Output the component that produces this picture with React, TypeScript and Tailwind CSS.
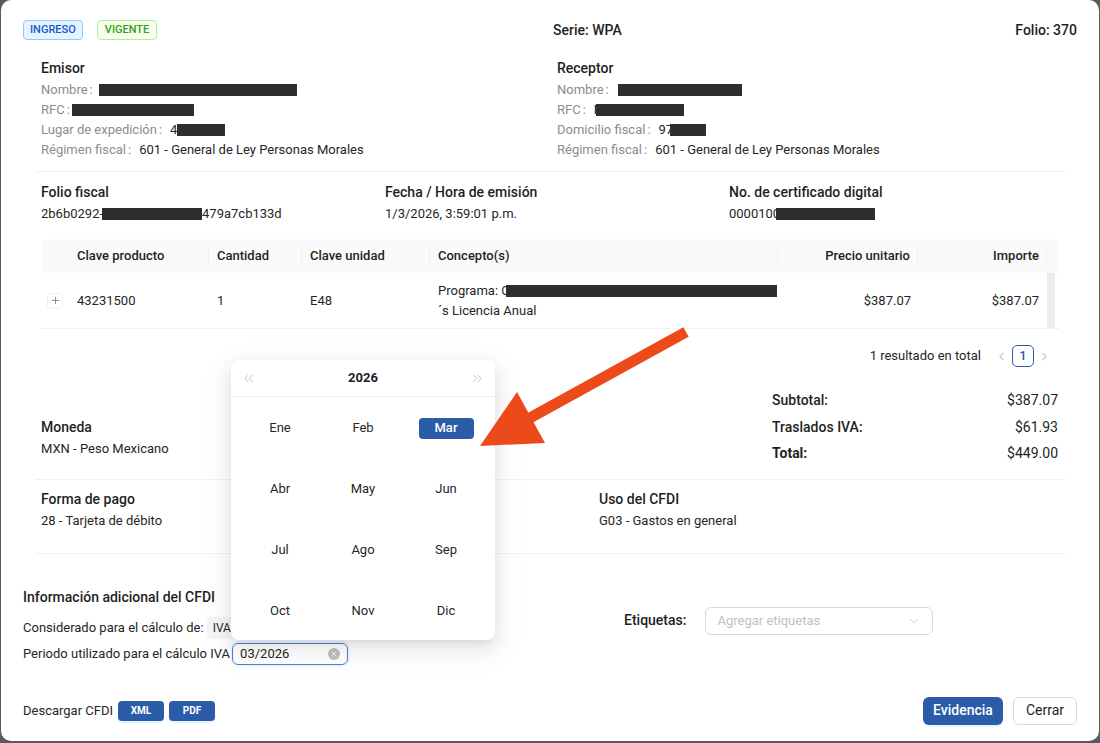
import { ChevronDown, ChevronLeft, ChevronRight, ChevronsLeft, ChevronsRight, Plus, X } from "lucide-react";

const Bar = ({ w, className = "" }: { w: string; className?: string }) => (
  <span className={`inline-block h-[12px] shrink-0 bg-[#2e2e2e] ${w} ${className}`} />
);

const Field = ({ label, children }: { label: string; children: React.ReactNode }) => (
  <div className="flex h-[20px] items-center text-[13px]">
    <span className="text-[#8c8c8c]">{label}</span>
    <span className="ml-[2px] mr-[8px] text-[#8c8c8c]">:</span>
    <span className="flex items-center text-[#262626]">{children}</span>
  </div>
);

const Heading = ({ children }: { children: React.ReactNode }) => (
  <div className="h-[20px] text-[14px] font-medium leading-[20px] text-[#1f1f1f]">{children}</div>
);

const Value = ({ children }: { children: React.ReactNode }) => (
  <div className="mt-[2px] flex h-[20px] items-center text-[13px] text-[#262626]">{children}</div>
);

const Th = ({ children, right, sep = true }: { children?: React.ReactNode; right?: boolean; sep?: boolean }) => (
  <div className={`relative flex items-center px-[8px] text-[13px] font-medium text-[#1f1f1f] ${right ? "justify-end" : ""}`}>
    {children}
    {sep && <span className="absolute right-0 top-1/2 h-[22px] w-px -translate-y-1/2 bg-[#f0f0f0]" />}
  </div>
);

const months = ["Ene", "Feb", "Mar", "Abr", "May", "Jun", "Jul", "Ago", "Sep", "Oct", "Nov", "Dic"];

export default function App() {
  return (
    <div className="h-[743px] w-[1100px] bg-[#5a5a5a] px-px pb-[2px] font-['Roboto',sans-serif]">
      <div className="relative h-full overflow-hidden rounded-[10px] bg-white">
        {/* header */}
        <div className="mt-[20px] flex h-[20px] items-center px-[22px]">
          <div className="flex w-[530px] items-center gap-[14px]">
            <span className="flex h-[20px] items-center rounded-[4px] border border-[#91caff] bg-[#e6f4ff] px-[6px] text-[11px] font-medium text-[#1554d1]">
              INGRESO
            </span>
            <span className="flex h-[20px] items-center rounded-[4px] border border-[#b7eb8f] bg-[#f6ffed] px-[7px] text-[11px] font-medium text-[#389e0d]">
              VIGENTE
            </span>
          </div>
          <div className="text-[14px] font-medium text-[#1f1f1f]">Serie: WPA</div>
          <div className="ml-auto text-[14px] font-medium text-[#1f1f1f]">Folio: 370</div>
        </div>

        {/* emisor / receptor */}
        <div className="mt-[18px] grid grid-cols-[516px_1fr] px-[40px]">
          <div>
            <Heading>Emisor</Heading>
            <div className="mt-[2px]">
              <Field label="Nombre">
                <Bar w="w-[198px]" className="-ml-[2px]" />
              </Field>
              <Field label="RFC">
                <Bar w="w-[122px]" className="-ml-[6px]" />
              </Field>
              <Field label="Lugar de expedición">
                4<Bar w="w-[48px]" />
              </Field>
              <Field label="Régimen fiscal">601 - General de Ley Personas Morales</Field>
            </div>
          </div>
          <div>
            <Heading>Receptor</Heading>
            <div className="mt-[2px]">
              <Field label="Nombre">
                <Bar w="w-[124px]" className="ml-[1px]" />
              </Field>
              <Field label="RFC">
                N<Bar w="w-[88px]" className="-ml-[7px]" />
              </Field>
              <Field label="Domicilio fiscal">
                97<Bar w="w-[36px]" className="-ml-[3px]" />
              </Field>
              <Field label="Régimen fiscal">601 - General de Ley Personas Morales</Field>
            </div>
          </div>
        </div>

        <div className="mx-[34px] mt-[11px] border-t border-[#f0f0f0]" />

        {/* folio fiscal row */}
        <div className="mt-[10px] grid grid-cols-[344px_344px_1fr] px-[40px]">
          <div>
            <Heading>Folio fiscal</Heading>
            <Value>
              2b6b0292-<Bar w="w-[100px]" className="-ml-[1px]" />
              479a7cb133d
            </Value>
          </div>
          <div>
            <Heading>Fecha / Hora de emisión</Heading>
            <Value>1/3/2026, 3:59:01 p.m.</Value>
          </div>
          <div>
            <Heading>No. de certificado digital</Heading>
            <Value>
              0000100<Bar w="w-[99px]" className="-ml-[4px]" />
            </Value>
          </div>
        </div>

        {/* table */}
        <div className="mx-[40px] mt-[15px]">
          <div className="grid h-[34px] grid-cols-[28px_140px_93px_128px_348px_140px_129px_12px] rounded-t-[8px] bg-[#fafafa]">
            <div />
            <Th>Clave producto</Th>
            <Th>Cantidad</Th>
            <Th>Clave unidad</Th>
            <Th>Concepto(s)</Th>
            <Th right>Precio unitario</Th>
            <Th right>Importe</Th>
            <div />
          </div>
          <div className="grid h-[56px] grid-cols-[28px_140px_93px_128px_348px_140px_129px_12px] border-b border-[#f0f0f0] text-[13px] text-[#262626]">
            <div className="flex items-center justify-center">
              <span className="flex h-[16px] w-[16px] items-center justify-center rounded-[4px] border border-[#f0f0f0] text-[#595959]">
                <Plus size={11} strokeWidth={1.4} />
              </span>
            </div>
            <div className="flex items-center px-[8px]">43231500</div>
            <div className="flex items-center px-[8px]">1</div>
            <div className="flex items-center px-[8px]">E48</div>
            <div className="flex flex-col justify-center whitespace-nowrap px-[8px] leading-[20px]">
              <div className="flex items-center">
                Programa: C<Bar w="w-[271px]" className="-ml-[4px]" />
              </div>
              <div>´s Licencia Anual</div>
            </div>
            <div className="flex items-center justify-end px-[7px]">$387.07</div>
            <div className="flex items-center justify-end px-[8px]">$387.07</div>
            <div className="flex">
              <div className="w-[8px] bg-[#ececec]" />
            </div>
          </div>
        </div>

        {/* pagination */}
        <div className="mr-[48px] mt-[16px] flex h-[22px] items-center justify-end text-[13px] text-[#262626]">
          <span className="mr-[14px]">1 resultado en total</span>
          <ChevronLeft size={13} className="text-[#c8c8c8]" />
          <span className="mx-[4px] flex h-[22px] w-[22px] items-center justify-center rounded-[5px] border border-[#2a5ca8] text-[13px] font-medium text-[#2a5ca8]">
            1
          </span>
          <ChevronRight size={13} className="text-[#c8c8c8]" />
        </div>

        {/* moneda + totals */}
        <div className="mt-[20px] flex px-[40px]">
          <div className="mt-[30px]">
            <Heading>Moneda</Heading>
            <Value>MXN - Peso Mexicano</Value>
          </div>
          <div className="ml-auto mr-px w-[286px] text-[14px] leading-[26.5px] text-[#1f1f1f]">
            <div className="flex justify-between">
              <span className="font-medium">Subtotal:</span>
              <span>$387.07</span>
            </div>
            <div className="flex justify-between">
              <span className="font-medium">Traslados IVA:</span>
              <span>$61.93</span>
            </div>
            <div className="flex justify-between">
              <span className="font-bold">Total:</span>
              <span>$449.00</span>
            </div>
          </div>
        </div>

        <div className="mx-[34px] mt-[12px] border-t border-[#f0f0f0]" />

        {/* forma de pago */}
        <div className="mt-[9px] grid grid-cols-[558px_1fr] px-[40px]">
          <div>
            <Heading>Forma de pago</Heading>
            <Value>28 - Tarjeta de débito</Value>
          </div>
          <div>
            <Heading>Uso del CFDI</Heading>
            <Value>G03 - Gastos en general</Value>
          </div>
        </div>

        <div className="mx-[34px] mt-[22px] border-t border-[#f0f0f0]" />

        {/* additional info */}
        <div className="mt-[33px] flex px-[22px]">
          <div className="w-[601px]">
            <Heading>Información adicional del CFDI</Heading>
            <div className="mt-[10px] flex h-[22px] items-center text-[13px] text-[#262626]">
              <span>Considerado para el cálculo de:</span>
              <span className="ml-[3px] flex h-[22px] items-center rounded-[4px] bg-[#f5f5f5] px-[6px] text-[12px]">IVA</span>
            </div>
            <div className="mt-[4px] flex h-[22px] items-center text-[13px] text-[#262626]">
              <span>Periodo utilizado para el cálculo IVA</span>
              <div className="ml-[2px] flex h-[22px] w-[116px] items-center rounded-[6px] border border-[#4a7fd0] pl-[7px] pr-[7px] shadow-[0_0_0_2px_rgba(5,145,255,0.06)]">
                <span className="flex-1">03/2026</span>
                <span className="flex h-[12px] w-[12px] items-center justify-center rounded-full bg-[#bfbfbf] text-white">
                  <X size={8} strokeWidth={2.5} />
                </span>
              </div>
            </div>
          </div>
          <div className="mt-[20px] flex h-[28px] items-center">
            <span className="text-[14px] font-medium text-[#1f1f1f]">Etiquetas:</span>
            <div className="ml-[19px] flex h-[28px] w-[228px] items-center rounded-[6px] border border-[#d9d9d9] px-[11px] text-[13px] text-[#bfbfbf]">
              <span className="flex-1">Agregar etiquetas</span>
              <ChevronDown size={14} strokeWidth={1.5} className="text-[#bfbfbf]" />
            </div>
          </div>
        </div>

        {/* footer */}
        <div className="mt-[32px] flex h-[28px] items-center px-[22px]">
          <span className="text-[13px] text-[#262626]">Descargar CFDI</span>
          <button className="ml-[5px] flex h-[20px] w-[46px] items-center justify-center rounded-[4px] bg-[#2a5ca8] text-[10px] font-bold text-white shadow-[0_2px_0_rgba(5,145,255,0.1)]">
            XML
          </button>
          <button className="ml-[5px] flex h-[20px] w-[46px] items-center justify-center rounded-[4px] bg-[#2a5ca8] text-[10px] font-bold text-white shadow-[0_2px_0_rgba(5,145,255,0.1)]">
            PDF
          </button>
          <button className="ml-auto flex h-[28px] w-[80px] items-center justify-center rounded-[6px] bg-[#2a5ca8] text-[14px] font-medium text-white shadow-[0_2px_0_rgba(5,145,255,0.1)]">
            Evidencia
          </button>
          <button className="ml-[10px] flex h-[28px] w-[64px] items-center justify-center rounded-[6px] border border-[#d9d9d9] bg-white text-[14px] text-[#1f1f1f]">
            Cerrar
          </button>
        </div>

        {/* month picker popup */}
        <div className="absolute left-[230px] top-[360px] h-[280px] w-[264px] rounded-[8px] bg-white shadow-[0_6px_16px_0_rgba(0,0,0,0.08),0_3px_6px_-4px_rgba(0,0,0,0.12),0_9px_28px_8px_rgba(0,0,0,0.05)]">
          <div className="flex h-[37px] items-center justify-between border-b border-[#f0f0f0] px-[10px]">
            <ChevronsLeft size={15} strokeWidth={1.3} className="text-[#b0b0b0]" />
            <span className="text-[13px] font-bold text-[#1f1f1f]">2026</span>
            <ChevronsRight size={15} strokeWidth={1.3} className="text-[#b0b0b0]" />
          </div>
          <div className="grid grid-cols-3 gap-y-[31px] px-[7.5px] pt-[16px]">
            {months.map((m) => (
              <div key={m} className="flex h-[30px] items-center justify-center">
                {m === "Mar" ? (
                  <span className="flex h-[21px] w-[55px] items-center justify-center rounded-[4px] bg-[#2a5ca8] text-[13px] font-medium text-white">
                    {m}
                  </span>
                ) : (
                  <span className="text-[13px] text-[#262626]">{m}</span>
                )}
              </div>
            ))}
          </div>
        </div>

        {/* annotation arrow */}
        <svg className="pointer-events-none absolute left-[-1px] top-0" width="1100" height="743" viewBox="0 0 1100 743">
          <line x1="686" y1="332" x2="528" y2="419" stroke="#ed4a1c" strokeWidth="11" />
          <polygon points="480,446 517,392 545,443" fill="#ed4a1c" />
        </svg>
      </div>
    </div>
  );
}
